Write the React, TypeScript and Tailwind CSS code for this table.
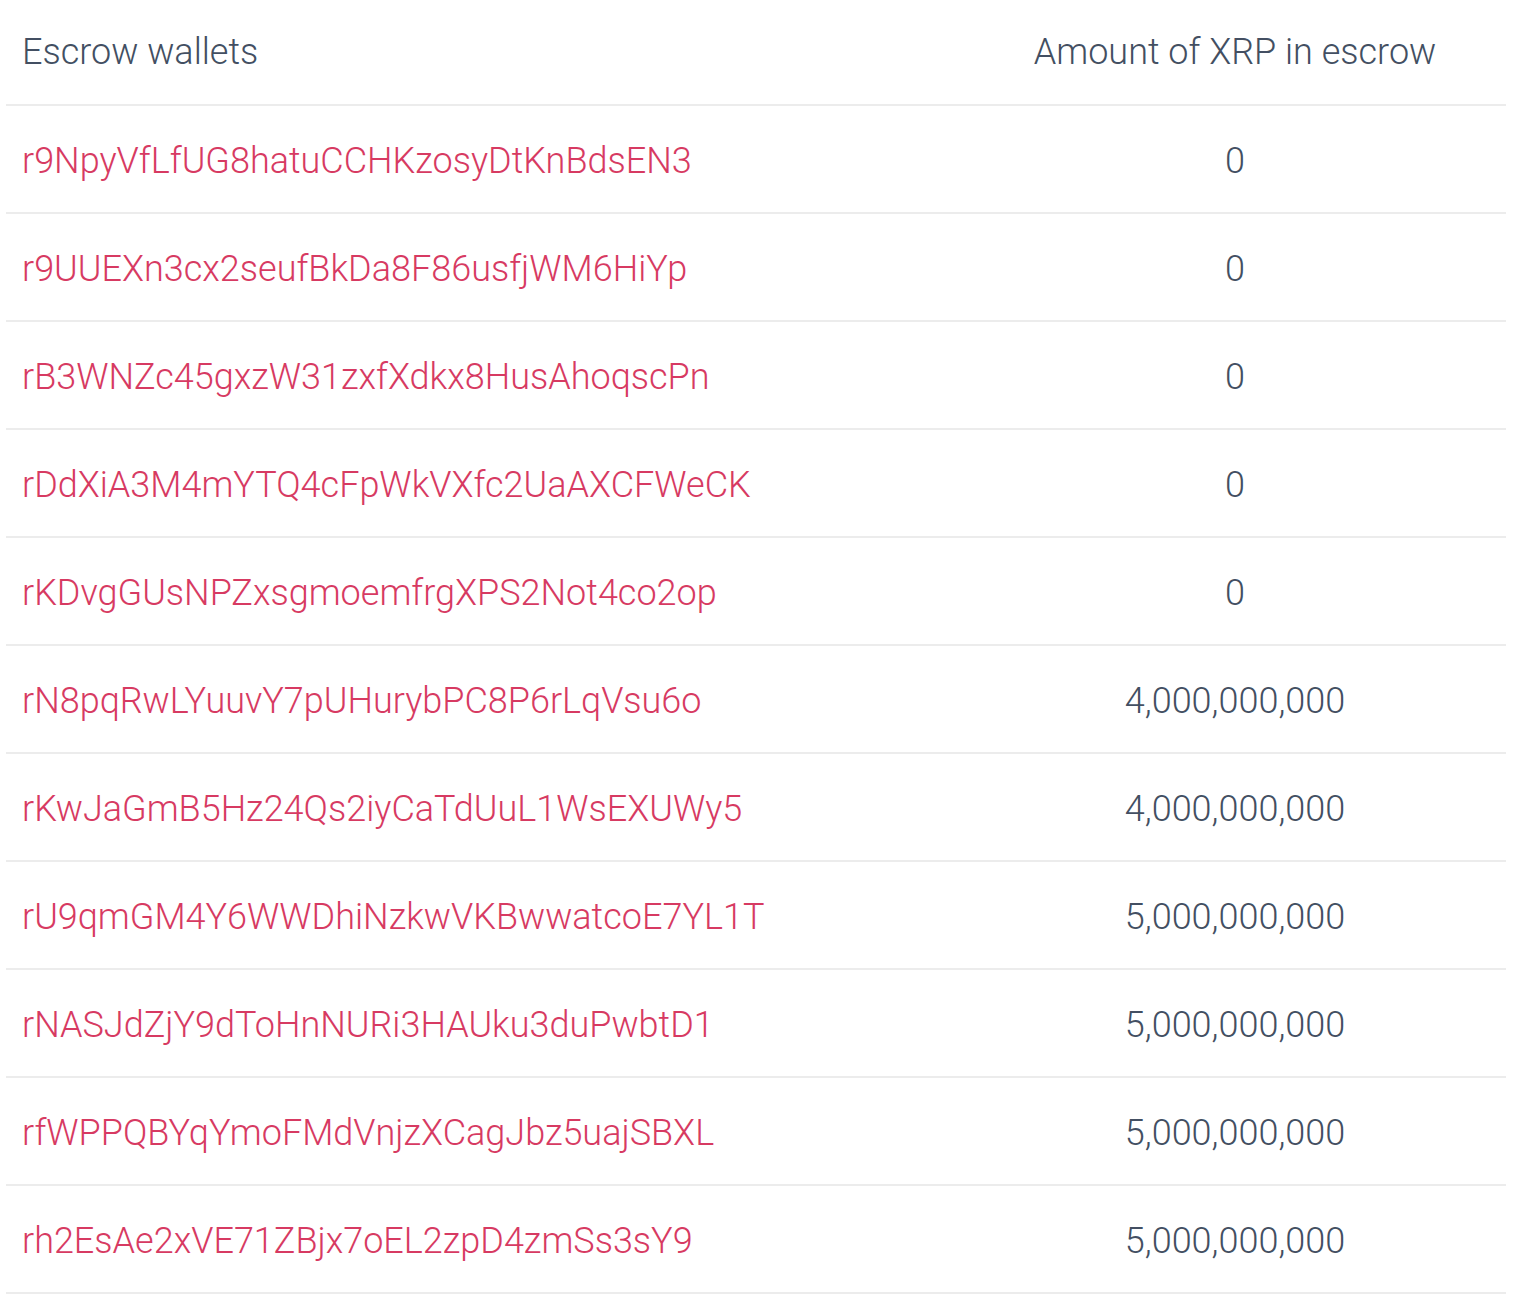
const wallets: [string, string][] = [
  ["r9NpyVfLfUG8hatuCCHKzosyDtKnBdsEN3", "0"],
  ["r9UUEXn3cx2seufBkDa8F86usfjWM6HiYp", "0"],
  ["rB3WNZc45gxzW31zxfXdkx8HusAhoqscPn", "0"],
  ["rDdXiA3M4mYTQ4cFpWkVXfc2UaAXCFWeCK", "0"],
  ["rKDvgGUsNPZxsgmoemfrgXPS2Not4co2op", "0"],
  ["rN8pqRwLYuuvY7pUHurybPC8P6rLqVsu6o", "4,000,000,000"],
  ["rKwJaGmB5Hz24Qs2iyCaTdUuL1WsEXUWy5", "4,000,000,000"],
  ["rU9qmGM4Y6WWDhiNzkwVKBwwatcoE7YL1T", "5,000,000,000"],
  ["rNASJdZjY9dToHnNURi3HAUku3duPwbtD1", "5,000,000,000"],
  ["rfWPPQBYqYmoFMdVnjzXCagJbz5uajSBXL", "5,000,000,000"],
  ["rh2EsAe2xVE71ZBjx7oEL2zpD4zmSs3sY9", "5,000,000,000"],
];

export default function App() {
  return (
    <div className="min-h-screen bg-white font-['Roboto',sans-serif] font-light text-[36px] text-[#434f62]">
      <div className="ml-[6px] w-[1500px]">
        {/* header */}
        <div className="grid grid-cols-[1fr_542px] h-[106px] items-center border-b-2 border-[#ececec]">
          <div className="pl-[16px]">Escrow wallets</div>
          <div className="text-center">Amount of XRP in escrow</div>
        </div>

        {wallets.map(([addr, amount]) => (
          <div
            key={addr}
            className="grid grid-cols-[1fr_542px] h-[108px] pt-[4px] items-center border-b-2 border-[#ececec]"
          >
            <a href="#" className="pl-[16px] text-[#d73a62]">
              {addr}
            </a>
            <div className="text-center">{amount}</div>
          </div>
        ))}
      </div>
    </div>
  );
}
